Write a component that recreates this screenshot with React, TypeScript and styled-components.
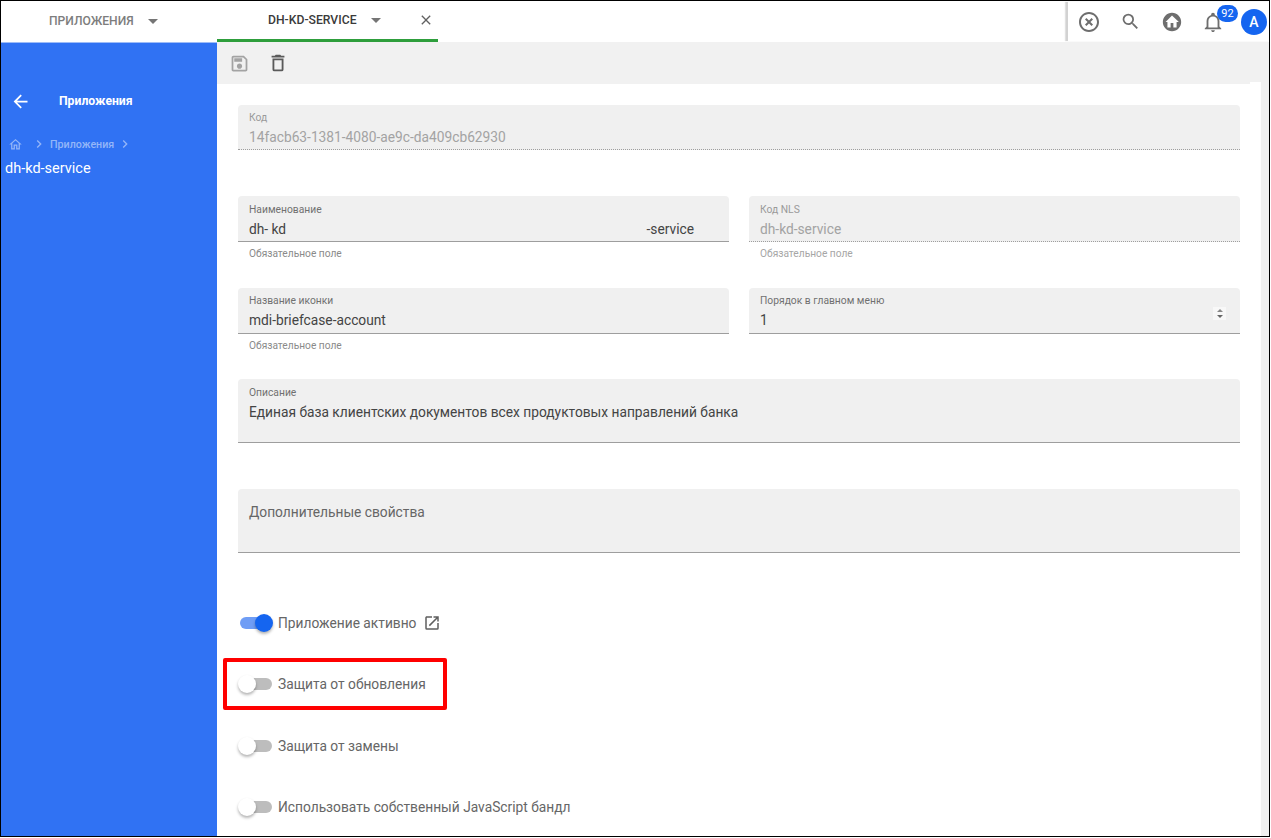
import React from 'react';
import styled, { createGlobalStyle } from 'styled-components';

const GlobalStyle = createGlobalStyle`
  html, body {
    margin: 0;
    padding: 0;
    height: 100%;
    overflow: hidden;
    background: #fff;
    font-family: Roboto, "Liberation Sans", sans-serif;
  }
`;

// Material Design icon paths
const ICONS = {
  close: 'M19,6.41L17.59,5L12,10.59L6.41,5L5,6.41L10.59,12L5,17.59L6.41,19L12,13.41L17.59,19L19,17.59L13.41,12L19,6.41Z',
  closeCircle:
    'M12,20C7.59,20 4,16.41 4,12C4,7.59 7.59,4 12,4C16.41,4 20,7.59 20,12C20,16.41 16.41,20 12,20M12,2C6.47,2 2,6.47 2,12C2,17.53 6.47,22 12,22C17.53,22 22,17.53 22,12C22,6.47 17.53,2 12,2M14.59,8L12,10.59L9.41,8L8,9.41L10.59,12L8,14.59L9.41,16L12,13.41L14.59,16L16,14.59L13.41,12L16,9.41L14.59,8Z',
  magnify:
    'M9.5,3A6.5,6.5 0 0,1 16,9.5C16,11.11 15.41,12.59 14.44,13.73L14.71,14H15.5L20.5,19L19,20.5L14,15.5V14.71L13.73,14.44C12.59,15.41 11.11,16 9.5,16A6.5,6.5 0 0,1 3,9.5A6.5,6.5 0 0,1 9.5,3M9.5,5C7,5 5,7 5,9.5C5,12 7,14 9.5,14C12,14 14,12 14,9.5C14,7 12,5 9.5,5Z',
  homeCircle:
    'M19.07,4.93C17.22,3 14.66,1.96 12,2C9.34,1.96 6.79,3 4.94,4.93C3,6.78 1.96,9.34 2,12C1.96,14.66 3,17.21 4.93,19.06C6.78,21 9.34,22.04 12,22C14.66,22.04 17.21,21 19.06,19.07C21,17.22 22.04,14.66 22,12C22.04,9.34 21,6.78 19.07,4.93M17,12V18H13.5V13H10.5V18H7V12H5L12,5L19.5,12H17Z',
  bell: 'M10 21H14C14 22.1 13.1 23 12 23S10 22.1 10 21M21 19V20H3V19L5 17V11C5 7.9 7 5.2 10 4.3V4C10 2.9 10.9 2 12 2S14 2.9 14 4V4.3C17 5.2 19 7.9 19 11V17L21 19M17 11C17 8.2 14.8 6 12 6S7 8.2 7 11V18H17V11Z',
  save: 'M17 3H5C3.89 3 3 3.9 3 5V19C3 20.1 3.89 21 5 21H19C20.1 21 21 20.1 21 19V7L17 3M19 19H5V5H16.17L19 7.83V19M12 12C10.34 12 9 13.34 9 15S10.34 18 12 18 15 16.66 15 15 13.66 12 12 12M6 6H15V10H6V6Z',
  trash: 'M6,19A2,2 0 0,0 8,21H16A2,2 0 0,0 18,19V7H6V19M8,9H16V19H8V9M15.5,4L14.5,3H9.5L8.5,4H5V6H19V4H15.5Z',
  home: 'M12 5.69L17 10.19V18H15V12H9V18H7V10.19L12 5.69M12 3L2 12H5V20H11V14H13V20H19V12H22L12 3Z',
  chevron: 'M8.59,16.58L13.17,12L8.59,7.41L10,6L16,12L10,18L8.59,16.58Z',
  arrowLeft: 'M20,11V13H8L13.5,18.5L12.08,19.92L4.16,12L12.08,4.08L13.5,5.5L8,11H20Z',
  openNew:
    'M14,3V5H17.59L7.76,14.83L9.17,16.24L19,6.41V10H21V3M19,19H5V5H12V3H5C3.89,3 3,3.9 3,5V19A2,2 0 0,0 5,21H19A2,2 0 0,0 21,19V12H19V19Z',
};

const Icon: React.FC<{ name: keyof typeof ICONS; size: number }> = ({ name, size }) => (
  <svg width={size} height={size} viewBox="0 0 24 24" fill="currentColor" style={{ display: 'block' }}>
    <path d={ICONS[name]} />
  </svg>
);

const Frame = styled.div`
  width: 1270px;
  height: 837px;
  box-sizing: border-box;
  border: 1px solid #000;
  display: flex;
  flex-direction: column;
  overflow: hidden;
`;

const TopBar = styled.header`
  height: 41px;
  flex: none;
  display: flex;
  background: #fff;
`;

const Tab = styled.div<{ $active?: boolean }>`
  width: ${p => (p.$active ? '221px' : '216px')};
  box-sizing: border-box;
  display: flex;
  align-items: center;
  padding-left: ${p => (p.$active ? '51px' : '48px')};
  padding-top: ${p => (p.$active ? '0' : '2px')};
  font-size: ${p => (p.$active ? '12.2px' : '12.1px')};
  font-weight: 500;
  color: ${p => (p.$active ? '#3a3a3a' : '#7d7d7d')};
  border-bottom: 3px solid ${p => (p.$active ? '#2e9e3c' : 'transparent')};
`;

const Caret = styled.span`
  margin-left: 14px;
  width: 0;
  height: 0;
  border-left: 5px solid transparent;
  border-right: 5px solid transparent;
  border-top: 5px solid #757575;
`;

const TabClose = styled.span`
  margin-left: 37px;
  display: flex;
  color: #616161;
`;

const Actions = styled.div`
  margin: 1px 0 1px auto;
  width: 203px;
  flex: none;
  display: flex;
  align-items: center;
  border-left: 2px solid #d2d2d2;
  box-shadow: -1px 0 1px rgba(0, 0, 0, 0.12);
  padding-left: 9px;
  box-sizing: border-box;
  color: #6e6e6e;
`;

const ActionSlot = styled.span<{ $w: number }>`
  width: ${p => p.$w}px;
  flex: none;
  display: flex;
  align-items: center;
  justify-content: center;
  position: relative;
`;

const Badge = styled.span`
  position: absolute;
  top: -6px;
  left: 32px;
  width: 21px;
  height: 17px;
  border-radius: 9px;
  background: #1565f0;
  color: #fff;
  font-size: 11px;
  display: flex;
  align-items: center;
  justify-content: center;
`;

const Avatar = styled.span`
  width: 26px;
  height: 26px;
  flex: none;
  border-radius: 50%;
  background: #1565f0;
  color: #fff;
  font-size: 14px;
  font-weight: 500;
  display: flex;
  align-items: center;
  justify-content: center;
`;

const Body = styled.div`
  flex: 1;
  min-height: 0;
  display: flex;
`;

const Sidebar = styled.aside`
  width: 216px;
  flex: none;
  background: #3072f3;
  color: #fff;
  border-top: 1px solid #9dbcf8;
  box-sizing: border-box;
`;

const SideHead = styled.div`
  display: flex;
  align-items: center;
  margin-top: 46px;
  padding-left: 9px;
  height: 24px;
  font-size: 12.2px;
  font-weight: 700;
  gap: 28px;
`;

const Crumbs = styled.div`
  display: flex;
  align-items: center;
  margin-top: 23px;
  padding-left: 7px;
  height: 16px;
  font-size: 10.7px;
  font-weight: 500;
  color: #94b6f8;
`;

const CrumbGap = styled.span`
  display: flex;
  margin: 0 3px 0 8px;
`;

const CrumbEnd = styled.span`
  display: flex;
  margin-left: 3px;
`;

const Current = styled.div`
  margin-top: 8px;
  padding-left: 4px;
  font-size: 14.5px;
  line-height: 18px;
`;

const Main = styled.main`
  flex: 1;
  min-width: 0;
  background: #f1f1f1;
  display: flex;
  flex-direction: column;
`;

const Toolbar = styled.div`
  height: 42px;
  flex: none;
  display: flex;
  align-items: center;
  gap: 17px;
  padding-left: 12px;
`;

const ToolIcon = styled.span<{ $muted?: boolean }>`
  display: flex;
  color: ${p => (p.$muted ? '#a3a3a3' : '#5a5a5a')};
`;

const Content = styled.div`
  position: relative;
  flex: 1;
  margin-right: 8px;
  background: #fff;
  padding: 21px 0 0 21px;
  box-sizing: border-box;

  &::after {
    content: '';
    position: absolute;
    top: -2px;
    right: 0;
    width: 11px;
    height: 2px;
    background: #fff;
  }
`;

const Row = styled.div<{ $top: number }>`
  display: grid;
  grid-template-columns: 491px 491px;
  column-gap: 20px;
  margin-top: ${p => p.$top}px;
`;

const Field = styled.div<{ $height?: number; $top?: number; $pad?: number; $disabled?: boolean; $wide?: boolean }>`
  position: relative;
  box-sizing: border-box;
  height: ${p => p.$height ?? 46}px;
  margin-top: ${p => p.$top ?? 0}px;
  ${p => (p.$wide ? 'width: 1002px;' : '')}
  padding: ${p => p.$pad ?? 7}px 11px 0;
  background: #f0f0f0;
  border-radius: 4px 4px 0 0;
  border-bottom: 1px ${p => (p.$disabled ? 'dotted #9e9e9e' : 'solid #9e9e9e')};
`;

const FieldLabel = styled.div<{ $disabled?: boolean }>`
  font-size: 10.3px;
  line-height: 12px;
  color: ${p => (p.$disabled ? '#9a9a9a' : '#707070')};
`;

const FieldValue = styled.div<{ $disabled?: boolean }>`
  margin-top: 3px;
  font-size: 13.76px;
  line-height: 20px;
  display: flex;
  color: ${p => (p.$disabled ? '#a3a3a3' : '#444')};
`;

const ValueTail = styled.span`
  margin-left: auto;
  padding-right: 24px;
`;

const Placeholder = styled.div`
  font-size: 13.76px;
  line-height: 20px;
  padding-top: 6px;
  color: #666;
`;

const Hint = styled.div<{ $disabled?: boolean }>`
  margin: 6px 0 0 11px;
  font-size: 10.2px;
  line-height: 12px;
  color: ${p => (p.$disabled ? '#a6a6a6' : '#8a8a8a')};
`;

const Spinner = styled.span`
  position: absolute;
  right: 14px;
  top: 19px;
  width: 13px;
  height: 13px;
  background: #f8f8f8;
  display: flex;
  flex-direction: column;
  align-items: center;
  justify-content: center;
  gap: 3px;
`;

const SpinArrow = styled.span<{ $down?: boolean }>`
  width: 0;
  height: 0;
  border-left: 3px solid transparent;
  border-right: 3px solid transparent;
  ${p => (p.$down ? 'border-top: 3px solid #666;' : 'border-bottom: 3px solid #888;')}
`;

const Switches = styled.div`
  margin-top: 60px;
  display: flex;
  flex-direction: column;
  gap: 41.3px;
`;

const SwitchRow = styled.div`
  display: flex;
  align-items: center;
  height: 20px;
  font-size: 13.76px;
  color: #666;
  position: relative;
`;

const SwitchTrack = styled.span<{ $on?: boolean }>`
  position: relative;
  width: 32px;
  height: 12px;
  margin: 0 6px 0 2px;
  border-radius: 6px;
  flex: none;
  background: ${p => (p.$on ? '#6f9df5' : '#bdbdbd')};
`;

const SwitchThumb = styled.span<{ $on?: boolean }>`
  position: absolute;
  top: -3px;
  ${p => (p.$on ? 'right: -1px;' : 'left: -2px;')}
  width: 18px;
  height: 18px;
  border-radius: 50%;
  background: ${p => (p.$on ? '#1565f0' : '#fff')};
  box-shadow: 0 2px 3px rgba(0, 0, 0, 0.3);
`;

const LinkIcon = styled.span`
  display: flex;
  margin-left: 7px;
  color: #5f5f5f;
`;

const Highlight = styled.div`
  position: absolute;
  left: -15px;
  top: -16px;
  width: 224px;
  height: 52px;
  border: 4px solid #ff0000;
  border-radius: 2px;
  box-sizing: border-box;
`;

const App: React.FC = () => (
  <Frame>
    <GlobalStyle />
    <TopBar>
      <Tab>
        ПРИЛОЖЕНИЯ
        <Caret />
      </Tab>
      <Tab $active>
        DH-KD-SERVICE
        <Caret />
        <TabClose><Icon name="close" size={16} /></TabClose>
      </Tab>
      <Actions>
        <ActionSlot $w={24}><Icon name="closeCircle" size={26} /></ActionSlot>
        <ActionSlot $w={58}><Icon name="magnify" size={21} /></ActionSlot>
        <ActionSlot $w={26}><Icon name="homeCircle" size={22} /></ActionSlot>
        <ActionSlot $w={56}>
          <Icon name="bell" size={22} />
          <Badge>92</Badge>
        </ActionSlot>
        <Avatar>A</Avatar>
      </Actions>
    </TopBar>
    <Body>
      <Sidebar>
        <SideHead>
          <Icon name="arrowLeft" size={21} />
          Приложения
        </SideHead>
        <Crumbs>
          <Icon name="home" size={15} />
          <CrumbGap><Icon name="chevron" size={16} /></CrumbGap>
          Приложения
          <CrumbEnd><Icon name="chevron" size={16} /></CrumbEnd>
        </Crumbs>
        <Current>dh-kd-service</Current>
      </Sidebar>
      <Main>
        <Toolbar>
          <ToolIcon $muted><Icon name="save" size={21} /></ToolIcon>
          <ToolIcon><Icon name="trash" size={22} /></ToolIcon>
        </Toolbar>
        <Content>
          <Field $wide $disabled $height={45}>
            <FieldLabel $disabled>Код</FieldLabel>
            <FieldValue $disabled>14facb63-1381-4080-ae9c-da409cb62930</FieldValue>
          </Field>
          <Row $top={46}>
            <div>
              <Field $pad={8}>
                <FieldLabel>Наименование</FieldLabel>
                <FieldValue>dh- kd<ValueTail>-service</ValueTail></FieldValue>
              </Field>
              <Hint>Обязательное поле</Hint>
            </div>
            <div>
              <Field $disabled $pad={8}>
                <FieldLabel $disabled>Код NLS</FieldLabel>
                <FieldValue $disabled>dh-kd-service</FieldValue>
              </Field>
              <Hint $disabled>Обязательное поле</Hint>
            </div>
          </Row>
          <Row $top={28}>
            <div>
              <Field>
                <FieldLabel>Название иконки</FieldLabel>
                <FieldValue>mdi-briefcase-account</FieldValue>
              </Field>
              <Hint>Обязательное поле</Hint>
            </div>
            <Field>
              <FieldLabel>Порядок в главном меню</FieldLabel>
              <FieldValue>1</FieldValue>
              <Spinner><SpinArrow /><SpinArrow $down /></Spinner>
            </Field>
          </Row>
          <Field $wide $height={64} $top={27} $pad={8}>
            <FieldLabel>Описание</FieldLabel>
            <FieldValue>Единая база клиентских документов всех продуктовых направлений банка</FieldValue>
          </Field>
          <Field $wide $height={64} $top={46}>
            <Placeholder>Дополнительные свойства</Placeholder>
          </Field>
          <Switches>
            <SwitchRow>
              <SwitchTrack $on><SwitchThumb $on /></SwitchTrack>
              Приложение активно
              <LinkIcon><Icon name="openNew" size={18} /></LinkIcon>
            </SwitchRow>
            <SwitchRow>
              <Highlight />
              <SwitchTrack><SwitchThumb /></SwitchTrack>
              Защита от обновления
            </SwitchRow>
            <SwitchRow>
              <SwitchTrack><SwitchThumb /></SwitchTrack>
              Защита от замены
            </SwitchRow>
            <SwitchRow>
              <SwitchTrack><SwitchThumb /></SwitchTrack>
              Использовать собственный JavaScript бандл
            </SwitchRow>
          </Switches>
        </Content>
      </Main>
    </Body>
  </Frame>
);

export default App;
